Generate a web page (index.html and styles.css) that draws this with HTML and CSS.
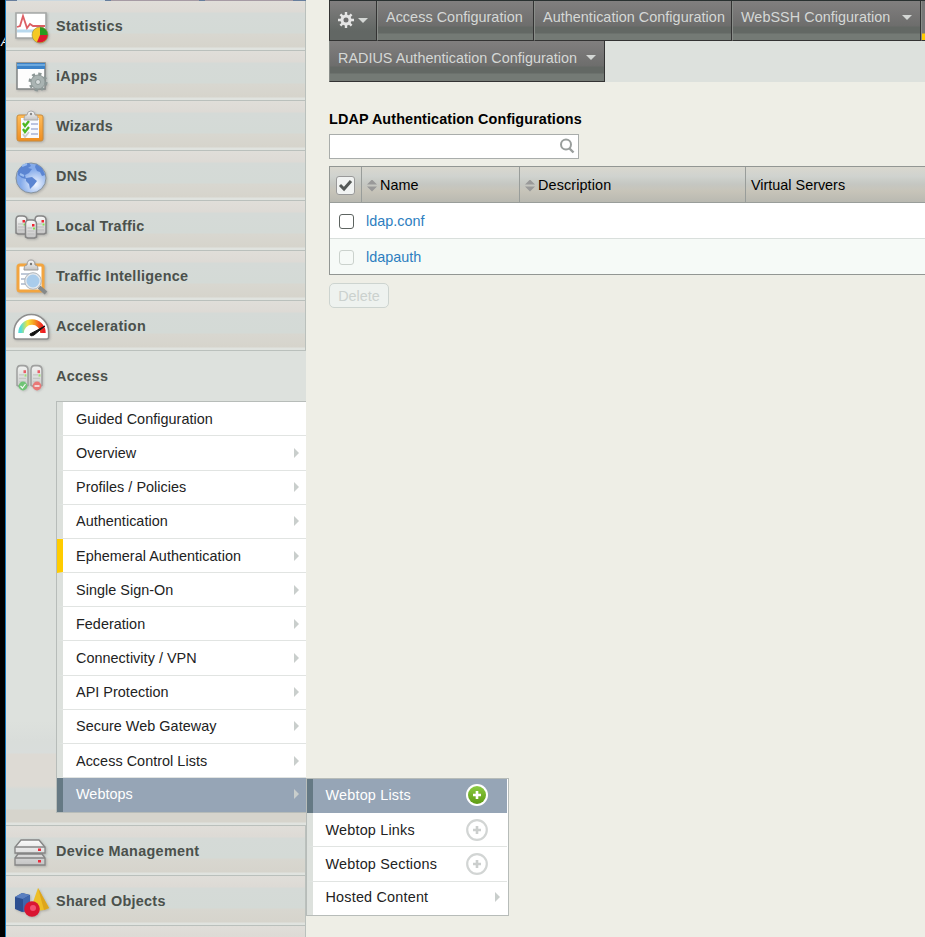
FILE: index.html
```
<!DOCTYPE html>
<html lang="en">
<head>
<meta charset="utf-8">
<title>LDAP Authentication Configurations</title>
<link rel="stylesheet" href="styles.css">
</head>
<body>
<svg width="0" height="0" class="defs">
<defs>
<linearGradient id="metal" x2="0" y2="1"><stop stop-color="#fafafa"/><stop offset="1" stop-color="#c4c4c4"/></linearGradient>
<linearGradient id="orange" x2="0" y2="1"><stop stop-color="#ffbd5a"/><stop offset="1" stop-color="#ee8d21"/></linearGradient>
<radialGradient id="globe" cx=".65" cy=".7"><stop stop-color="#f2f7ff"/><stop offset="1" stop-color="#85abea"/></radialGradient>
<linearGradient id="green" x2="0" y2="1"><stop stop-color="#8bcb42"/><stop offset="1" stop-color="#5f9b14"/></linearGradient>
<linearGradient id="dial"><stop stop-color="#55dcd8"/><stop offset=".3" stop-color="#f5e53b"/><stop offset=".6" stop-color="#f59a20"/><stop offset="1" stop-color="#ed1c24"/></linearGradient>
<g id="server"><path d="M1 18V5Q1 1 4.500 1h3q4.500 0 4.500 4v13l-2 1H3z" fill="url(#metal)" stroke="#858585" stroke-width="1.500"/><path d="M3 9h5M3 12h7M3 15h7" stroke="#bbb"/><path d="M7.500 5h2.500v2.500H7.500z" fill="#ef2634"/><path d="M8.500 8.500h2v2h-2z" fill="#82df50"/></g>
<g id="plus-off"><circle cx="11" cy="11" r="9.800" fill="#fff" stroke="#d2d5d4" stroke-width="2.200"/><path d="M11 7v8M7 11h8" stroke="#cbcecd" stroke-width="2.600"/></g>
</defs>
</svg>
<div class="screen">
<div class="edge"><span class="edge-letter">A</span></div>
<aside class="sidebar">
<div class="strip"><i></i><i></i><i></i></div>
<nav>
<a class="module first"><svg class="icon" viewBox="0 0 40 40"><path d="M8 10h30v25H8z" fill="#fff" stroke="#a5a8a7" stroke-width="1.600"/><path d="M9 28h28" stroke="#b9d9ee" stroke-width="3"/><path d="M9 24l3-1 3-10 4 12 3-4 3 2h12" fill="none" stroke="#dd5f64" stroke-width="1.800"/><circle cx="32" cy="32" r="8" fill="#f4c824"/><path d="M32 32v-8a8 8 0 0 1 8 8z" fill="#299b20"/><path d="M32 32h8a8 8 0 0 1-11 7z" fill="#dc1831"/><circle cx="32" cy="32" r="8" fill="none" stroke="#885" stroke-width=".6"/></svg>Statistics</a>
<a class="module"><svg class="icon" viewBox="0 0 40 40"><rect x="9" y="10" width="28" height="26" fill="#fdfdfd" stroke="#858989" stroke-width="1.600"/><path d="M9 10h28v6H9z" fill="#3b82c8"/><path d="M9 12h28" stroke="#6ba8de" stroke-width="2"/><circle cx="30" cy="29" r="8" fill="none" stroke="#8c9796" stroke-width="3" stroke-dasharray="3.140 3.140"/><circle cx="30" cy="29" r="7" fill="#a9b3b2" stroke="#8c9796"/><circle cx="30" cy="29" r="2.500" fill="#d7dddd" stroke="#8c9796"/></svg>iApps</a>
<a class="module"><svg class="icon" viewBox="0 0 40 40"><rect x="9" y="12" width="26" height="26" rx="2" fill="url(#orange)" stroke="#c98b3d"/><path d="M13 15h18v20H13z" fill="#f8faff"/><path d="M23 21h7M23 26h7M23 31h7" stroke="#bbc4e0" stroke-width="2"/><path d="M15 20l2 3 4-5M15 26l2 3 4-5" fill="none" stroke="#4db722" stroke-width="2.300"/><path d="M15 31l2 3 4-5" fill="none" stroke="#ccc" stroke-width="1.800"/><path d="M16 17q0-5 3-5 0-4 4-4t4 4q3 0 3 5z" fill="url(#metal)" stroke="#aaa"/><circle cx="23" cy="11" r="1.200" fill="#888"/></svg>Wizards</a>
<a class="module"><svg class="icon" viewBox="0 0 40 40"><circle cx="23" cy="25" r="15" fill="url(#globe)" stroke="#86939f"/><path d="M10 18q4-7 11-8l2 3-3 2 4 1-3 4-4 2 1 4-4-1-4-3zM18 25l6-1 5 4-3 4-4 4-1-5-3-3zM28 11l6 4 3 7-3 1-2-4-3-1-2-4z" fill="#5b85d2"/><path d="M14 13l5-2M12 21l4 2" stroke="#9abdf0" stroke-width="2"/></svg>DNS</a>
<a class="module"><svg class="icon" viewBox="0 0 40 40"><use href="#server" x="7" y="12"/><use href="#server" x="26" y="12"/><use href="#server" x="16.500" y="16"/></svg>Local Traffic</a>
<a class="module"><svg class="icon" viewBox="0 0 40 40"><rect x="10" y="12" width="25" height="26" rx="2" fill="#fff" stroke="#f2a541" stroke-width="3"/><path d="M13 21h8M13 26h8M13 31h8" stroke="#aab8cc" stroke-width="1.500"/><path d="M16 17q0-5 3-5 0-5 4-5t4 5q3 0 3 5z" fill="url(#metal)" stroke="#999"/><circle cx="23" cy="11" r="1.200" fill="#777"/><path d="M31 34l7 6" stroke="#858989" stroke-width="4"/><circle cx="25" cy="28" r="7.500" fill="#a9cceb" stroke="#e5e9ed" stroke-width="2"/><circle cx="25" cy="28" r="8.300" fill="none" stroke="#969da3" stroke-width=".7"/></svg>Traffic Intelligence</a>
<a class="module"><svg class="icon" viewBox="0 0 40 40"><path d="M6 34V29a17.300 17.500 0 0 1 34.600 0v5q0 2-2 2H8q-2 0-2-2z" fill="#fff" stroke="#8d8d8d" stroke-width="1.500"/><path d="M13 30a11 11 0 0 1 22 0" fill="none" stroke="url(#dial)" stroke-width="5.500"/><path d="M22 31l15-8-11 9q-4 2-4-1z" fill="#111" stroke="#111"/></svg>Acceleration</a>
<section class="access">
<a class="access-title"><svg class="icon faded" viewBox="0 0 40 40"><use href="#server" x="8" y="10" transform="scale(1 1.150)"/><use href="#server" x="22" y="10" transform="scale(1 1.150)"/><circle cx="15" cy="33" r="4.400" fill="#43b84b"/><path d="M12.500 33l2 2 3-4" fill="none" stroke="#fff" stroke-width="1.200"/><circle cx="29" cy="33" r="4.400" fill="#ef4d4d"/><path d="M26.500 33h5" stroke="#fff" stroke-width="1.500"/></svg>Access</a>
<div class="submenu">
<a class="initial">Guided Configuration</a>
<a class="more">Overview</a>
<a class="more">Profiles / Policies</a>
<a class="more">Authentication</a>
<a class="more current">Ephemeral Authentication</a>
<a class="more">Single Sign-On</a>
<a class="more">Federation</a>
<a class="more">Connectivity / VPN</a>
<a class="more">API Protection</a>
<a class="more">Secure Web Gateway</a>
<a class="more">Access Control Lists</a>
<a class="more hover">Webtops</a>
<div class="flyout">
<a class="hover">Webtop Lists<svg class="plus" viewBox="0 0 22 22"><circle cx="11" cy="11" r="11" fill="#fff"/><circle cx="11" cy="11" r="9" fill="url(#green)"/><path d="M11 7v8M7 11h8" stroke="#fff" stroke-width="2.600"/></svg></a>
<a>Webtop Links<svg class="plus" viewBox="0 0 22 22"><use href="#plus-off"/></svg></a>
<a>Webtop Sections<svg class="plus" viewBox="0 0 22 22"><use href="#plus-off"/></svg></a>
<a class="more">Hosted Content</a>
</div>
</div>
</section>
<a class="module"><svg class="icon" viewBox="0 0 40 40"><g fill="url(#metal)" stroke="#858585" stroke-width="1.300"><path d="M8 18l5-6h18l5 6 1 1v6H7v-6zM7 30l3-4h24l3 4v7H7z"/><path d="M7 19h30M7 30h30"/></g><path d="M30 20.500h3v2.500h-3zM30 32h3v2.500h-3z" fill="#ec2b3b"/></svg>Device Management</a>
<a class="module"><svg class="icon" viewBox="0 0 40 40"><path d="M7 19l7-4 8 2v15l-8 2-7-3z" fill="#2b4f91"/><path d="M7 19l7-4 8 2-7 4z" fill="#597fc0"/><path d="M15 21l7-4v15l-7 2z" fill="#3d66ad"/><path d="M30 10l11 20q-9 5-18 0z" fill="#eebf27"/><path d="M30 10l11 20-5 2z" fill="#dda51d"/><circle cx="24" cy="31" r="7.800" fill="#d91532"/><circle cx="25" cy="30" r="3" fill="#f24f70"/></svg>Shared Objects</a>
<a class="module last"><svg class="icon" viewBox="0 0 40 40"><circle cx="24" cy="22" r="12" fill="#8b8f9d"/></svg></a>
</nav>
</aside>
<main>
<div class="topline"></div>
<div class="tabs">
<a class="tab gear"><svg viewBox="0 0 16 16" width="16" height="16"><path d="M8 0v16M0 8h16M2.400 2.400l11.200 11.200M13.600 2.400L2.400 13.600" stroke="#e5e5e5" stroke-width="2.400"/><circle cx="8" cy="8" r="4" fill="#707070" stroke="#e5e5e5" stroke-width="3"/></svg><i class="down"></i></a>
<a class="tab t1">Access Configuration</a>
<a class="tab t2">Authentication Configuration</a>
<a class="tab t3">WebSSH Configuration<i class="down"></i></a>
<a class="tab selected"></a>
</div>
<div class="tabs second"><a class="tab t4">RADIUS Authentication Configuration<i class="down"></i></a></div>
<div class="content">
<h1>LDAP Authentication Configurations</h1>
<div class="search"><svg width="16" height="16" viewBox="0 0 16 16"><circle cx="7" cy="6.500" r="5" fill="none" stroke="#999e9c" stroke-width="2"/><path d="M10.500 10.500l4 4" stroke="#999e9c" stroke-width="2.400"/></svg></div>
<div class="table">
<div class="row head"><div class="check"><span class="box checked"><svg width="17" height="17" viewBox="0 0 17 17"><path d="M3 8l4 4 7-8" fill="none" stroke="#555957" stroke-width="3"/></svg></span></div><div class="name"><i class="sort"></i>Name</div><div class="desc"><i class="sort"></i>Description</div><div class="virtual">Virtual Servers</div></div>
<div class="row"><div class="check"><span class="box"></span></div><a>ldap.conf</a></div>
<div class="row alt"><div class="check"><span class="box disabled"></span></div><a>ldapauth</a></div>
</div>
<span class="delete">Delete</span>
</div>
</main>
</div>
</body>
</html>
```
FILE: styles.css
```
* { box-sizing: border-box; }
body { margin: 0; overflow: hidden; background: #eeeee6; font: 14.4px "Liberation Sans", Arial, sans-serif; color: #222; white-space: nowrap; }
.defs { position: absolute; }
.screen { display: flex; width: 925px; height: 937px; overflow: hidden; }
.edge { flex: 0 0 5px; background: #000; overflow: hidden; padding-top: 33px; }
.edge-letter { color: #fff; font-size: 12px; font-style: italic; margin-left: 1px; }
.sidebar { flex: 0 0 301px; height: 937px; border-left: 1px solid #1679bd; position: relative; z-index: 2; }
.strip { height: 1px; display: flex; gap: 6px; padding-left: 11px; background: #677e9d; }
.strip i { width: 88px; background: #a69ba4; }
.strip i:first-child { background: #cbd8df; }
.module { height: 50px; display: flex; align-items: center; color: #4b514c; font-weight: bold; letter-spacing: .3px; border-bottom: 1px solid #bac0bc; border-right: 1px solid #bac0bc; background: linear-gradient(#e0ded9 0, #dddad5 11px, #d5dad7 12px, #d4dad6 32px, #d8d7d0 33px, #d6d4cc 46px, #e0e3df 47px); padding-top: 1px; }
.icon { width: 40px; height: 40px; margin: -4px 10px 0 0; overflow: visible; filter: drop-shadow(1px 1px 1px #8888); flex: none; transform: translate(2px, -1px); }
.icon.faded { opacity: .7; }
.access { height: 475px; padding-bottom: 13px; border-bottom: 1px solid #bac0bc; background: linear-gradient(#dde1dd 370px, #d9ddda 390px, #d9dddb 402px, #dddad4 403px, #dddad4 435px, #d5dad7 438px, #d5dad7 458px, #d6d4cc 459px, #d6d4cc 471px, #e0e3df 472px); }
.access-title { height: 50px; display: flex; align-items: center; font-weight: bold; letter-spacing: .3px; color: #4b514c; }
.submenu { position: relative; width: 250px; height: 412.400px; margin-left: 50px; border: 1px solid #b7bcb9; border-right: 0; }
.submenu a { height: 34.200px; display: flex; align-items: center; justify-content: space-between; border-left: 6px solid #dde1dd; border-bottom: 1px solid #e1e4e2; padding: 0 7px 0 13px; background: #fff; letter-spacing: .04px; }
.submenu .initial { height: 34.350px; }
.more::after { content: ""; border: 5px solid transparent; border-left-color: #c9cecc; border-right: 0; }
.submenu .current { border-left-color: #fc0; }
.submenu .hover { background: #96a5b6; color: #fff; border-left-color: #657984; border-bottom: 0; padding-bottom: 2px; }
.flyout { position: absolute; left: 249px; top: 376px; width: 203px; height: 138px; border: 1px solid #b7bcb9; background: #fff; }
.flyout a { margin-right: 1px; padding-left: 12.500px; letter-spacing: .2px; }
.flyout a:last-child { border-bottom: 0; padding-bottom: 2px; height: 33px; }
.plus { width: 22px; height: 22px; margin-right: 12px; }
main { flex: 1; min-width: 0; padding-left: 23px; overflow: hidden; }
.topline { height: 1px; background: #293030; }
.tabs { height: 40px; width: 650px; display: flex; background: #dde1dd; }
.tab { flex: none; height: 40px; padding: 0 8px 7px; display: flex; align-items: center; justify-content: space-between; color: #d5d8d6; border-left: 1px solid #898d89; border-right: 1px solid #333; border-bottom: 1px solid #333; background: linear-gradient(#817f7f, #6d6d6c 25px, #636864 26px, #636864 32px, #747a75 33px); letter-spacing: .04px; }
.gear { width: 48px; padding-bottom: 1px; background: linear-gradient(#817f7f, #626764 30px); border-left-color: #333; }
.t1 { width: 157px; }
.t2 { width: 198px; }
.t3 { width: 189px; }
.selected { width: 180px; background: linear-gradient(#777 32px, #fc0 33px); }
.second { height: 41px; }
.second .tab { height: 41px; width: 276px; letter-spacing: .02px; }
.down { border: 5px solid transparent; border-top-color: #d4d7d5; border-bottom: 0; }
.content { padding-top: 28px; }
h1 { margin: 0; height: 24px; font-size: 14.400px; line-height: 18px; letter-spacing: .1px; color: #000; }
.search { width: 250px; height: 25px; background: #fff; border: 1px solid #a9adab; display: flex; justify-content: flex-end; align-items: center; padding: 0 3px 2px 0; }
.table { width: 650px; margin-top: 7px; border: 1px solid #929693; background: #fff; }
.row { height: 36px; display: flex; align-items: center; border-bottom: 1px solid #d9dfdc; }
.row.alt { height: 35px; border: 0; background: #f6faf7; }
.head { height: 36px; color: #000; background: linear-gradient(#d9d7ce, #d0d3cf 9px, #c5c7c2 17px, #c7c4b9 24px, #b9b9b1); border-color: #999d9a; }
.head > div { height: 35px; display: flex; align-items: center; border-right: 1px solid #999d9a; }
.check { width: 32px; height: 35px; display: flex; align-items: center; justify-content: center; }
.box { width: 15px; height: 15px; border: 1px solid #5d6360; border-radius: 3px; background: #fff; margin-top: 2px; }
.box.disabled { border-color: #cbd2cd; background: #f6faf7; }
.box.checked { width: 19px; height: 19px; border-color: #999; background: #f1f3f2; margin-top: 2px; }
.name { width: 158px; padding-left: 5px; }
.desc { width: 226px; padding-left: 5px; letter-spacing: .12px; }
.virtual { flex: 1; padding-left: 5px; }
.sort { width: 10px; height: 12px; margin-right: 3px; background: #999; clip-path: polygon(50% 0, 100% 5px, 0 5px, 0 7px, 100% 7px, 50% 100%, 0 7px, 0 5px); margin-top: 2px; }
.row a { color: #2d7ec0; margin-left: 4px; }
.delete { display: flex; align-items: center; justify-content: center; width: 60px; height: 25px; margin-top: 8px; border: 1px solid #cdd4d0; border-radius: 5px; background: #eef2ef; color: #cbd1ce; }
```
